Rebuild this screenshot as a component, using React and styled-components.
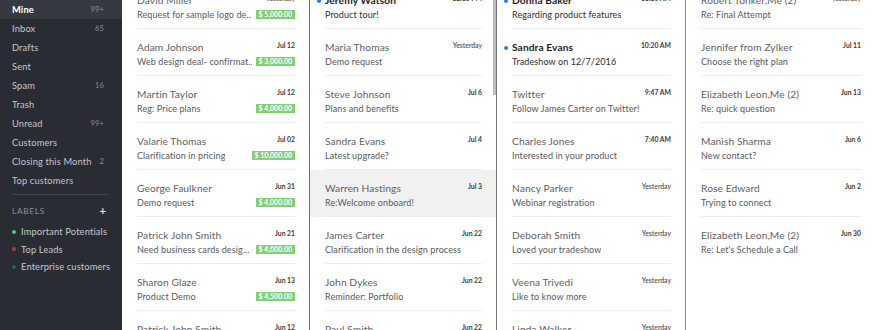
import React from 'react';
import styled, { createGlobalStyle } from 'styled-components';

const GlobalStyle = createGlobalStyle`
  body {
    margin: 0;
    overflow: hidden;
    font-family: Lato, "Liberation Sans", sans-serif;
  }
`;

const folders = [
  { name: 'Mine', count: '99+', active: true },
  { name: 'Inbox', count: '65' },
  { name: 'Drafts' },
  { name: 'Sent' },
  { name: 'Spam', count: '16' },
  { name: 'Trash' },
  { name: 'Unread', count: '99+' },
  { name: 'Customers' },
  { name: 'Closing this Month', count: '2' },
  { name: 'Top customers' },
];

const labels = [
  { name: 'Important Potentials', color: '#3fcf86' },
  { name: 'Top Leads', color: '#c5332a' },
  { name: 'Enterprise customers', color: '#17713f' },
];

const columns = [
  {
    width: 188,
    border: '#6f7074',
    mails: [
      { from: 'David Miller', date: 'Yesterday', subject: 'Request for sample logo de..', amount: '$ 5,000.00' },
      { from: 'Adam Johnson', date: 'Jul 12', subject: 'Web design deal- confirmat...', amount: '$ 3,000.00' },
      { from: 'Martin Taylor', date: 'Jul 12', subject: 'Reg: Price plans', amount: '$ 4,000.00' },
      { from: 'Valarie Thomas', date: 'Jul 02', subject: 'Clarification in pricing', amount: '$ 10,000.00' },
      { from: 'George Faulkner', date: 'Jun 31', subject: 'Demo request', amount: '$ 4,000.00' },
      { from: 'Patrick John Smith', date: 'Jun 21', subject: 'Need business cards desig...', amount: '$ 4,000.00' },
      { from: 'Sharon Glaze', date: 'Jun 13', subject: 'Product Demo', amount: '$ 4,500.00' },
      { from: 'Patrick John Smith', date: 'Jun 12', subject: 'Logo revisions', amount: '$ 2,000.00' },
    ],
  },
  {
    width: 187,
    border: '#77787c',
    scroll: true,
    mails: [
      { from: 'Jeremy Watson', date: '12:15 PM', subject: 'Product tour!', unread: true },
      { from: 'Maria Thomas', date: 'Yesterday', subject: 'Demo request' },
      { from: 'Steve Johnson', date: 'Jul 6', subject: 'Plans and benefits' },
      { from: 'Sandra Evans', date: 'Jul 4', subject: 'Latest upgrade?' },
      { from: 'Warren Hastings', date: 'Jul 3', subject: 'Re:Welcome onboard!', selected: true },
      { from: 'James Carter', date: 'Jun 22', subject: 'Clarification in the design process' },
      { from: 'John Dykes', date: 'Jun 22', subject: 'Reminder: Portfolio' },
      { from: 'Paul Smith', date: 'Jun 22', subject: 'Meeting notes' },
    ],
  },
  {
    width: 189,
    border: '#8a8b8f',
    mails: [
      { from: 'Donna Baker', date: '11:30 AM', subject: 'Regarding product features', unread: true },
      { from: 'Sandra Evans', date: '10:20 AM', subject: 'Tradeshow on 12/7/2016', unread: true },
      { from: 'Twitter', date: '9:47 AM', subject: 'Follow James Carter on Twitter!' },
      { from: 'Charles Jones', date: '7:40 AM', subject: 'Interested in your product' },
      { from: 'Nancy Parker', date: 'Yesterday', subject: 'Webinar registration' },
      { from: 'Deborah Smith', date: 'Yesterday', subject: 'Loved your tradeshow' },
      { from: 'Veena Trivedi', date: 'Yesterday', subject: 'Like to know more' },
      { from: 'Linda Walker', date: 'Yesterday', subject: 'Quick follow up' },
    ],
  },
  {
    mails: [
      { from: 'Robert Tonker,Me (2)', date: 'Yesterday', subject: 'Re: Final Attempt' },
      { from: 'Jennifer from Zylker', date: 'Jul 11', subject: 'Choose the right plan' },
      { from: 'Elizabeth Leon,Me (2)', date: 'Jun 13', subject: 'Re: quick question' },
      { from: 'Manish Sharma', date: 'Jun 6', subject: 'New contact?' },
      { from: 'Rose Edward', date: 'Jun 2', subject: 'Trying to connect' },
      { from: 'Elizabeth Leon,Me (2)', date: 'Jun 30', subject: "Re: Let's Schedule a Call" },
    ],
  },
];

const Shell = styled.div`
  display: flex;
  height: 330px;
  overflow: hidden;
  background: #fff;
`;

const Sidebar = styled.nav`
  flex: 0 0 122px;
  background: #2a2c33;
  color: #c6c8ce;
  font-size: 9.3px;
  letter-spacing: 0.15px;
`;

const Folder = styled.div`
  display: flex;
  align-items: center;
  justify-content: space-between;
  height: 19px;
  padding: 0 18px 0 12px;
  background: ${p => (p.$active ? '#373941' : 'transparent')};
  color: ${p => (p.$active ? '#fff' : '#c3c5cb')};
  font-weight: ${p => (p.$active ? 700 : 400)};
`;

const Count = styled.span`
  font-size: 7.5px;
  font-weight: 400;
  color: #8c8e95;
`;

const Divider = styled.div`
  height: 1px;
  background: #42444c;
  margin: 4px 13px 0 12px;
`;

const LabelsHead = styled.div`
  display: flex;
  align-items: center;
  justify-content: space-between;
  height: 15px;
  margin-top: 8px;
  padding: 0 15px 0 12px;
  font-size: 8.3px;
  letter-spacing: 0.7px;
  color: #8c8e95;
`;

const Plus = styled.span`
  font-size: 12px;
  font-weight: 700;
  color: #d8dade;
`;

const LabelList = styled.div`
  padding-top: 5px;
`;

const Label = styled.div`
  display: flex;
  align-items: center;
  gap: 5px;
  height: 17.5px;
  padding-left: 12px;
`;

const LabelDot = styled.span`
  width: 4px;
  height: 4px;
  border-radius: 50%;
  background: ${p => p.$color};
`;

const Column = styled.section`
  position: relative;
  flex: ${p => (p.$width ? `0 0 ${p.$width}px` : '1 1 auto')};
  box-sizing: border-box;
  border-right: ${p => (p.$border ? `1px solid ${p.$border}` : 'none')};
  overflow: hidden;
`;

const ScrollThumb = styled.div`
  position: absolute;
  top: 0;
  right: 0;
  width: 3px;
  height: 95px;
  background: #bdbdbd;
`;

const List = styled.div`
  margin-top: -18px;
`;

const Row = styled.div`
  padding: 0 14px 0 15px;
  background: ${p => (p.$selected ? '#f1f1f1' : 'transparent')};
`;

const RowBody = styled.div`
  padding: 11px 0 7px;
  border-bottom: 1px solid ${p => (p.$last ? 'transparent' : '#ededed')};
`;

const Line = styled.div`
  display: flex;
  align-items: center;
  justify-content: space-between;
  height: 14px;
`;

const Sender = styled.span`
  position: relative;
  font-size: 10.2px;
  letter-spacing: 0.1px;
  color: ${p => (p.$unread ? '#1d1d1f' : '#5f6064')};
  font-weight: ${p => (p.$unread ? 700 : 400)};
  white-space: nowrap;
`;

const UnreadDot = styled.span`
  position: absolute;
  left: -8px;
  top: 5px;
  width: 4px;
  height: 4px;
  border-radius: 50%;
  background: #2d7fe0;
`;

const DateText = styled.span`
  align-self: flex-start;
  margin-top: 1px;
  font-size: 6.8px;
  font-weight: ${p => (p.$soft ? 600 : 700)};
  color: ${p => (p.$soft ? '#55565a' : '#3a3b3e')};
`;

const Subject = styled.span`
  font-size: 9px;
  letter-spacing: 0.1px;
  color: ${p => (p.$unread ? '#2b2c2f' : '#57585c')};
  white-space: nowrap;
  overflow: hidden;
`;

const Amount = styled.span`
  flex: none;
  background: #84cf74;
  color: #fff;
  font-size: 7px;
  font-weight: 700;
  line-height: 9px;
  padding: 0 3px;
  margin-left: 4px;
`;

const MailRow = ({ mail, last }) => (
  <Row $selected={mail.selected}>
    <RowBody $last={last}>
      <Line>
        <Sender $unread={mail.unread}>
          {mail.unread && <UnreadDot />}
          {mail.from}
        </Sender>
        <DateText $soft={mail.date === 'Yesterday'}>{mail.date}</DateText>
      </Line>
      <Line>
        <Subject $unread={mail.unread}>{mail.subject}</Subject>
        {mail.amount && <Amount>{mail.amount}</Amount>}
      </Line>
    </RowBody>
  </Row>
);

export default function App() {
  return (
    <Shell>
      <GlobalStyle />
      <Sidebar>
        {folders.map(f => (
          <Folder key={f.name} $active={f.active}>
            <span>{f.name}</span>
            {f.count && <Count>{f.count}</Count>}
          </Folder>
        ))}
        <Divider />
        <LabelsHead>
          <span>LABELS</span>
          <Plus>+</Plus>
        </LabelsHead>
        <LabelList>
          {labels.map(l => (
            <Label key={l.name}>
              <LabelDot $color={l.color} />
              <span>{l.name}</span>
            </Label>
          ))}
        </LabelList>
      </Sidebar>
      {columns.map((col, i) => (
        <Column key={i} $width={col.width} $border={col.border}>
          {col.scroll && <ScrollThumb />}
          <List>
            {col.mails.map((m, j) => (
              <MailRow key={j} mail={m} last={!col.scroll && !col.mails[j + 1] && col.mails.length < 8} />
            ))}
          </List>
        </Column>
      ))}
    </Shell>
  );
}
